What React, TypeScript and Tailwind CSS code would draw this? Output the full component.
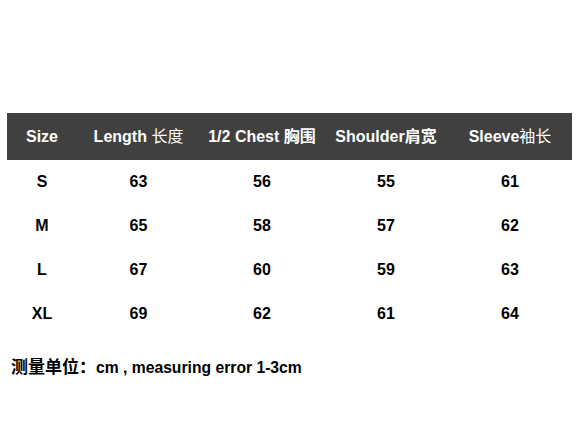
import React from "react";

const cols = ["w-[70px]", "w-[123px]", "w-[124px]", "w-[124px]", "w-[124px]"];
const header: React.ReactNode[] = [
  "Size",
  <>{"Length "}<span className="font-normal">长度</span></>,
  "1/2 Chest 胸围",
  "Shoulder肩宽",
  <>{"Sleeve"}<span className="font-normal">袖长</span></>,
];
const rows = [
  ["S", "63", "56", "55", "61"],
  ["M", "65", "58", "57", "62"],
  ["L", "67", "60", "59", "63"],
  ["XL", "69", "62", "61", "64"],
];

export default function App() {
  return (
    <div
      className="w-[581px] h-[447px] bg-white pt-[113px] pl-[7px]"
      style={{ fontFamily: '"Liberation Sans", Arial, "Noto Sans CJK SC", sans-serif' }}
    >
      <div className="w-[565px]">
        <div className="flex h-[47px] bg-[#404040] text-white font-bold text-[16px]">
          {header.map((h, i) => (
            <div key={i} className={`${cols[i]} flex items-center justify-center whitespace-pre`}>
              {h}
            </div>
          ))}
        </div>
        {rows.map((r, ri) => (
          <div key={ri} className="flex h-[44px] text-black font-bold text-[16px]">
            {r.map((c, i) => (
              <div key={i} className={`${cols[i]} flex items-center justify-center`}>
                {c}
              </div>
            ))}
          </div>
        ))}
      </div>
      <div className="mt-[19px] pl-[4px] text-[15.7px] font-bold text-black whitespace-nowrap">
        <span className="text-[17px]">测量单位：</span>cm , measuring error 1-3cm
      </div>
    </div>
  );
}
